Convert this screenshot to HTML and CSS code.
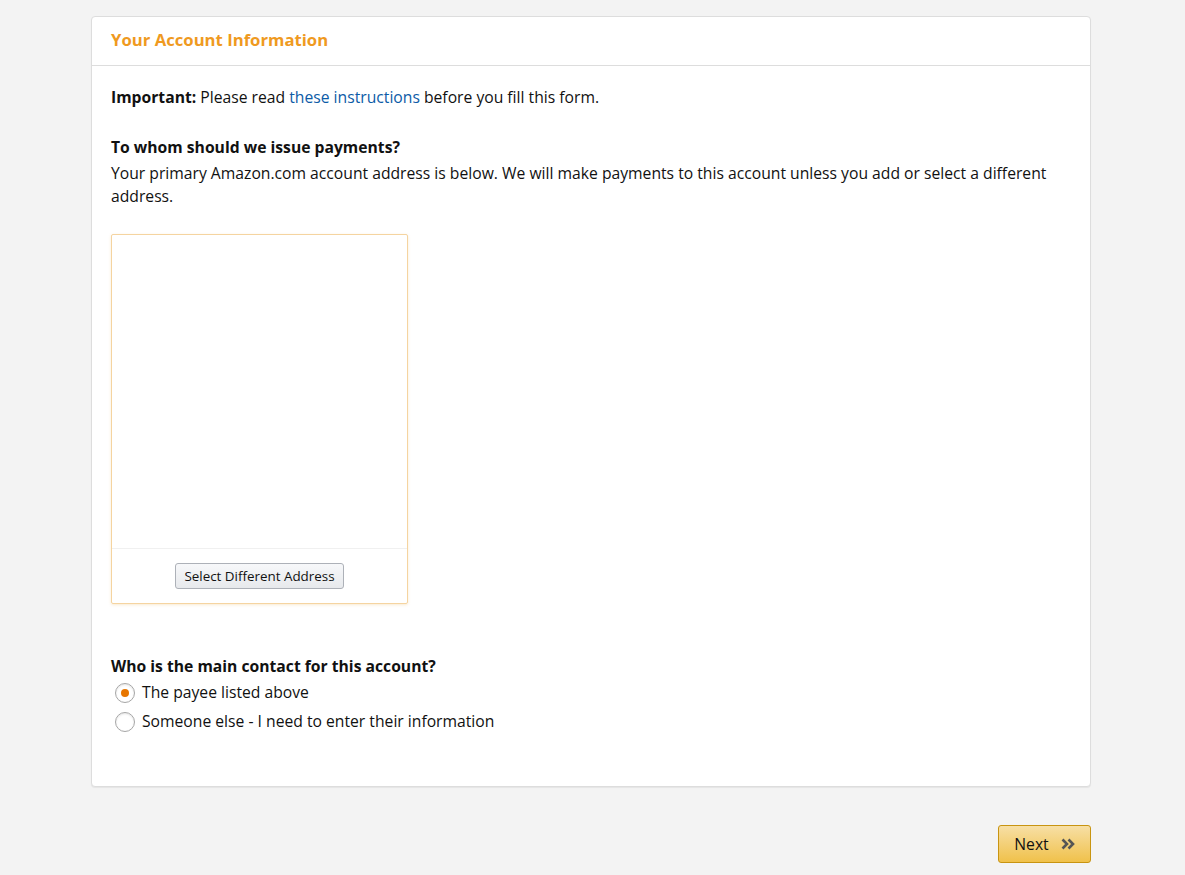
FILE: index.html
```html
<!DOCTYPE html>
<html>
<head>
<meta charset="utf-8">
<link rel="stylesheet" href="styles.css">
</head>
<body>
<div class="page">
  <div class="panel">
    <div class="panel-head">Your Account Information</div>
    <div class="panel-body">
      <p class="important"><b>Important:</b> Please read <a href="#">these instructions</a> before you fill this form.</p>
      <h4 class="q">To whom should we issue payments?</h4>
      <p class="desc">Your primary Amazon.com account address is below. We will make payments to this account unless you add or select a different address.</p>
      <div class="addr">
        <div class="addr-body"></div>
        <div class="addr-foot"><button class="btn-sel">Select Different Address</button></div>
      </div>
      <h4 class="q q2">Who is the main contact for this account?</h4>
      <label class="radio"><span class="dot on"></span>The payee listed above</label>
      <label class="radio"><span class="dot"></span>Someone else - I need to enter their information</label>
    </div>
  </div>
  <div class="actions">
    <button class="btn-next">Next <svg width="14" height="12" viewBox="0 0 14 12"><path d="M1.5 1.5 L6 6 L1.5 10.5 M7.5 1.5 L12 6 L7.5 10.5" fill="none" stroke="#555" stroke-width="2.6"/></svg></button>
  </div>
</div>
</body>
</html>
```
FILE: styles.css
```css
html, body { margin: 0; padding: 0; }
body {
  background: #f3f3f3;
  font-family: "Open Sans", "Noto Sans", sans-serif;
  font-size: 15.7px;
  color: #111;
}
.page { width: 1000px; margin: 0 0 0 91px; padding-top: 16px; }
.panel {
  background: #fff;
  border: 1px solid #ddd;
  border-radius: 4px;
  box-shadow: 0 1px 1px rgba(0,0,0,0.06);
}
.panel-head {
  height: 48px;
  line-height: 46px;
  padding: 0 19px;
  color: #ef9a1f;
  font-weight: bold;
  font-size: 16.7px;
  border-bottom: 1px solid #ddd;
}
.panel-body { padding: 20px 19px 50px; }
.important { margin: 0 0 28px; line-height: 22px; }
.important a { color: #0c5ba7; text-decoration: none; }
.q { margin: 0; font-size: 15.7px; font-weight: bold; line-height: 22px; }
.desc { margin: 4px 0 0; line-height: 23px; }
.addr {
  margin-top: 26px;
  width: 295px;
  height: 368px;
  border: 1px solid #f5d4a0;
  border-radius: 2px;
  box-shadow: 0 1px 3px rgba(230,170,70,0.25);
  display: flex;
  flex-direction: column;
}
.addr-body { flex: 1; }
.addr-foot {
  height: 54px;
  border-top: 1px solid #f0f0f0;
  display: flex;
  align-items: center;
  justify-content: center;
}
.btn-sel {
  font-family: inherit;
  font-size: 13.4px;
  color: #111;
  height: 26px;
  width: 169px;
  padding: 0;
  background: linear-gradient(#f7f8fa, #e7e9ec);
  border: 1px solid #adb1b8;
  border-radius: 3px;
}
.q2 { margin-top: 51px; }
.radio { display: flex; align-items: center; height: 29px; line-height: 29px; }
.radio:first-of-type { margin-top: 1px; }
.dot {
  width: 20px; height: 20px;
  border: 1px solid #a6a6a6;
  border-radius: 50%;
  box-sizing: border-box;
  margin: 0 7px 0 4px;
  background: #fff;
  box-shadow: inset 0 1px 2px rgba(0,0,0,0.1);
  position: relative;
}
.dot.on::after {
  content: "";
  position: absolute;
  left: 5px; top: 5px;
  width: 8px; height: 8px;
  border-radius: 50%;
  background: #e77600;
}
.actions { display: flex; justify-content: flex-end; padding-top: 38px; }
.btn-next {
  font-family: inherit;
  font-size: 15.7px;
  color: #111;
  width: 93px;
  height: 38px;
  background: linear-gradient(#f7dfa5, #f0c14b);
  border: 1px solid #c89411;
  border-radius: 3px;
  display: flex;
  align-items: center;
  justify-content: center;
  gap: 12px;
}
```
